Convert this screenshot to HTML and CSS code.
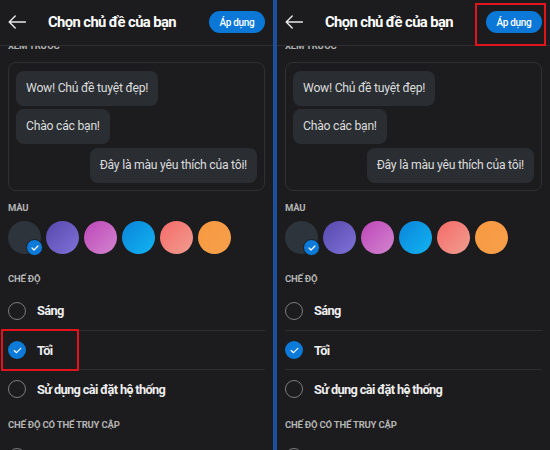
FILE: index.html
```html
<!DOCTYPE html>
<html lang="vi">
<head>
<meta charset="utf-8">
<title>Chọn chủ đề của bạn</title>
<link rel="stylesheet" href="styles.css">
</head>
<body>
<div class="screen">
  <div class="phone">
    <header class="header">
      <svg class="back" width="18" height="14" viewBox="0 0 18 14"><path d="M17.5 7H1.2M7.2 1L1.2 7l6 6" fill="none" stroke="#e8e8e8" stroke-width="1.4" stroke-linecap="round" stroke-linejoin="round"/></svg>
      <h1 class="title">Chọn chủ đề của bạn</h1>
      <button class="apply">Áp dụng</button>
    </header>
    <main class="content">
      <div class="label label-clipped">XEM TRƯỚC</div>
      <div class="card">
        <div class="bubble">Wow! Chủ đề tuyệt đẹp!</div>
        <div class="bubble">Chào các bạn!</div>
        <div class="bubble bubble-me">Đây là màu yêu thích của tôi!</div>
      </div>
      <div class="label label-colors">MÀU</div>
      <div class="swatches">
        <div class="swatch sw-slate"><span class="badge"><svg width="8" height="6" viewBox="0 0 8 6"><path d="M1 3l2 2 4-4" fill="none" stroke="#fff" stroke-width="1.2" stroke-linecap="round" stroke-linejoin="round"/></svg></span></div>
        <div class="swatch sw-purple"></div>
        <div class="swatch sw-magenta"></div>
        <div class="swatch sw-blue"></div>
        <div class="swatch sw-coral"></div>
        <div class="swatch sw-orange"></div>
      </div>
      <div class="label label-mode">CHẾ ĐỘ</div>
      <div class="options">
        <div class="option"><span class="radio"></span><span class="opt-text">Sáng</span></div>
        <div class="option"><span class="radio radio-on"><svg width="9" height="7" viewBox="0 0 9 7"><path d="M1.2 3.5l2.3 2.2 4.3-4.4" fill="none" stroke="#fff" stroke-width="1.2" stroke-linecap="round" stroke-linejoin="round"/></svg></span><span class="opt-text">Tối</span></div>
        <div class="option"><span class="radio"></span><span class="opt-text">Sử dụng cài đặt hệ thống</span></div>
      </div>
      <div class="label label-access">CHẾ ĐỘ CÓ THỂ TRUY CẬP</div>
      <div class="options">
        <div class="option"><span class="radio"></span></div>
      </div>
    </main>
    <div class="highlight hl-dark"></div>
  </div>
  <div class="divider"></div>
  <div class="phone">
    <header class="header">
      <svg class="back" width="18" height="14" viewBox="0 0 18 14"><path d="M17.5 7H1.2M7.2 1L1.2 7l6 6" fill="none" stroke="#e8e8e8" stroke-width="1.4" stroke-linecap="round" stroke-linejoin="round"/></svg>
      <h1 class="title">Chọn chủ đề của bạn</h1>
      <button class="apply">Áp dụng</button>
    </header>
    <main class="content">
      <div class="label label-clipped">XEM TRƯỚC</div>
      <div class="card">
        <div class="bubble">Wow! Chủ đề tuyệt đẹp!</div>
        <div class="bubble">Chào các bạn!</div>
        <div class="bubble bubble-me">Đây là màu yêu thích của tôi!</div>
      </div>
      <div class="label label-colors">MÀU</div>
      <div class="swatches">
        <div class="swatch sw-slate"><span class="badge"><svg width="8" height="6" viewBox="0 0 8 6"><path d="M1 3l2 2 4-4" fill="none" stroke="#fff" stroke-width="1.2" stroke-linecap="round" stroke-linejoin="round"/></svg></span></div>
        <div class="swatch sw-purple"></div>
        <div class="swatch sw-magenta"></div>
        <div class="swatch sw-blue"></div>
        <div class="swatch sw-coral"></div>
        <div class="swatch sw-orange"></div>
      </div>
      <div class="label label-mode">CHẾ ĐỘ</div>
      <div class="options">
        <div class="option"><span class="radio"></span><span class="opt-text">Sáng</span></div>
        <div class="option"><span class="radio radio-on"><svg width="9" height="7" viewBox="0 0 9 7"><path d="M1.2 3.5l2.3 2.2 4.3-4.4" fill="none" stroke="#fff" stroke-width="1.2" stroke-linecap="round" stroke-linejoin="round"/></svg></span><span class="opt-text">Tối</span></div>
        <div class="option"><span class="radio"></span><span class="opt-text">Sử dụng cài đặt hệ thống</span></div>
      </div>
      <div class="label label-access">CHẾ ĐỘ CÓ THỂ TRUY CẬP</div>
      <div class="options">
        <div class="option"><span class="radio"></span></div>
      </div>
    </main>
    <div class="highlight hl-apply"></div>
  </div>
</div>
</body>
</html>
```
FILE: styles.css
```css
* { box-sizing: border-box; }
html, body { margin: 0; padding: 0; }
body {
  width: 550px;
  height: 450px;
  overflow: hidden;
  background: #1c1c1e;
  font-family: "Roboto", "Noto Sans", "Liberation Sans", sans-serif;
  color: #e6e6e6;
}
.screen {
  display: flex;
  height: 450px;
}
.phone {
  position: relative;
  width: 273px;
  height: 450px;
  overflow: hidden;
  background: #1c1c1e;
  display: flex;
  flex-direction: column;
}
.divider {
  width: 4px;
  background: #1b4f9f;
  flex: none;
}
.header {
  flex: none;
  height: 46px;
  display: flex;
  align-items: center;
  padding: 0 8px 1px 8px;
  border-bottom: 1px solid #2e2e31;
  background: #1c1c1e;
  position: relative;
  z-index: 2;
}
.back { flex: none; }
.title {
  margin: 0 0 0 22px;
  font-size: 14.8px;
  font-weight: 700;
  color: #ffffff;
  letter-spacing: -0.6px;
  white-space: nowrap;
}
.apply {
  margin-left: auto;
  width: 56px;
  height: 22px;
  border: none;
  border-radius: 11px;
  background: #0b78d8;
  color: #ffffff;
  font-family: inherit;
  font-size: 10px;
  font-weight: 500;
  letter-spacing: -0.3px;
  padding: 0;
}
.content {
  flex: 1;
  overflow: hidden;
  padding: 0 8px;
}
.label {
  font-size: 9.5px;
  font-weight: 700;
  line-height: 12px;
  color: #b4b4b4;
  letter-spacing: -0.2px;
  white-space: nowrap;
}
.label-clipped { margin-top: -6px; }
.card {
  margin-top: 10px;
  border: 1px solid #303033;
  border-radius: 8px;
  padding: 8px 7px 7px 7px;
  display: flex;
  flex-direction: column;
  gap: 3px;
}
.bubble {
  align-self: flex-start;
  height: 35px;
  line-height: 35px;
  padding: 0 10px;
  background: #2a2e33;
  border-radius: 8px;
  font-size: 12.2px;
  letter-spacing: -0.25px;
  color: #dcdcdc;
  white-space: nowrap;
}
.bubble-me { align-self: flex-end; margin-top: 1px; }
.label-colors { margin-top: 11px; }
.swatches {
  margin-top: 7px;
  display: flex;
  gap: 5px;
}
.swatch {
  position: relative;
  width: 33px;
  height: 33px;
  border-radius: 50%;
  flex: none;
}
.sw-slate { background: #2e343b; }
.sw-purple { background: linear-gradient(135deg, #5848ad, #7f72d8); }
.sw-magenta { background: linear-gradient(135deg, #bd46b8, #d385d0); }
.sw-blue { background: linear-gradient(135deg, #0a84d9, #12b4f2); }
.sw-coral { background: linear-gradient(135deg, #f66a68, #f09e90); }
.sw-orange { background: linear-gradient(135deg, #f79940, #f7a04c); }
.badge {
  position: absolute;
  left: 18px;
  top: 18px;
  width: 17px;
  height: 17px;
  border-radius: 50%;
  background: #0b7ad8;
  border: 1.5px solid #1c1c1e;
  display: flex;
  align-items: center;
  justify-content: center;
}
.label-mode { margin-top: 19px; }
.options {
  margin-top: 6px;
  display: flex;
  flex-direction: column;
}
.option {
  height: 39px;
  display: flex;
  align-items: center;
  gap: 11px;
}
.option + .option { border-top: 1px solid #2e2e31; }
.radio {
  width: 18px;
  height: 18px;
  border-radius: 50%;
  border: 1.5px solid #7c7c7e;
  flex: none;
  display: flex;
  align-items: center;
  justify-content: center;
}
.radio-on {
  border: none;
  background: #0b7ad8;
}
.opt-text {
  font-size: 12.8px;
  font-weight: 700;
  letter-spacing: -0.65px;
  color: #eeeeee;
  white-space: nowrap;
}
.label-access { margin-top: 11px; }
.highlight {
  position: absolute;
  border: 2px solid #e3141b;
  z-index: 3;
}
.hl-dark {
  left: 1px;
  top: 329px;
  width: 78px;
  height: 42px;
}
.hl-apply {
  left: 198px;
  top: 3px;
  width: 71px;
  height: 43px;
}
```
